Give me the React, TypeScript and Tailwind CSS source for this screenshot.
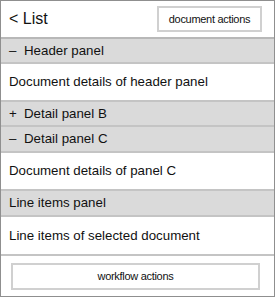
import React from "react";

const font = { fontFamily: '"Liberation Sans", Arial, sans-serif' };

function GrayRow({ sign, label, h }: { sign?: string; label: string; h: string }) {
  return (
    <div className={`${h} flex items-center bg-[#dadada] border-b-2 border-[#c4c4c4] pl-[8px] text-[13.3px] text-[#111]`}>
      {sign ? <span className="w-[15px]">{sign}</span> : null}
      <span>{label}</span>
    </div>
  );
}

function WhiteRow({ label, h }: { label: string; h: string }) {
  return (
    <div className={`${h} flex items-center bg-white border-b-2 border-[#c4c4c4] pl-[8px] text-[13.3px] text-[#111]`}>
      {label}
    </div>
  );
}

export default function App() {
  return (
    <div style={font} className="w-[275px] h-[297px] border border-[#8f8f8f] bg-white flex flex-col overflow-hidden">
      <div className="h-[38px] flex items-center justify-between border-b-2 border-[#b8b8b8] pl-[8px] pr-[12px]">
        <span className="text-[16px] text-[#111]">&lt; List</span>
        <div className="w-[105px] h-[26px] border-2 border-[#d0d0d0] flex items-center justify-center text-[11px] tracking-[-0.3px] text-[#111]">
          document actions
        </div>
      </div>
      <GrayRow sign="–" label="Header panel" h="h-[25px]" />
      <WhiteRow label="Document details of header panel" h="h-[38px]" />
      <GrayRow sign="+" label="Detail panel B" h="h-[25px]" />
      <GrayRow sign="–" label="Detail panel C" h="h-[26px]" />
      <WhiteRow label="Document details of panel C" h="h-[38px]" />
      <GrayRow label="Line items panel" h="h-[26px]" />
      <WhiteRow label="Line items of selected document" h="h-[39px]" />
      <div className="flex-1 flex items-center pl-[10px]">
        <div className="w-[249px] h-[27px] border-2 border-[#d0d0d0] flex items-center justify-center text-[11px] tracking-[-0.3px] text-[#111]">
          workflow actions
        </div>
      </div>
    </div>
  );
}
